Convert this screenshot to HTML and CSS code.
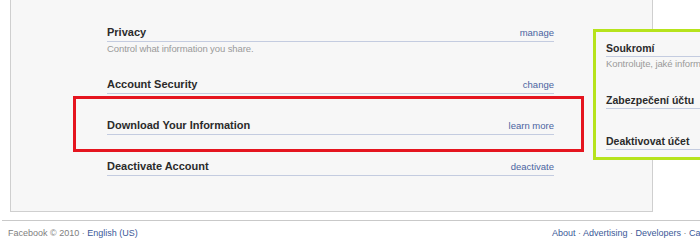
FILE: index.html
```html
<!DOCTYPE html>
<html lang="en">
<head>
    <meta charset="UTF-8">
    <title>Account Settings</title>
    <link rel="stylesheet" href="styles.css">
</head>
<body>
    <div class="page">
        <div class="panel">
            <div class="settings">
                <div class="row">
                    <div class="row-head">
                        <span class="row-title">Privacy</span>
                        <a class="row-link" href="#">manage</a>
                    </div>
                    <div class="row-desc">Control what information you share.</div>
                </div>
                <div class="row">
                    <div class="row-head">
                        <span class="row-title">Account Security</span>
                        <a class="row-link" href="#">change</a>
                    </div>
                </div>
                <div class="row">
                    <div class="row-head">
                        <span class="row-title">Download Your Information</span>
                        <a class="row-link" href="#">learn more</a>
                    </div>
                </div>
                <div class="row">
                    <div class="row-head">
                        <span class="row-title">Deactivate Account</span>
                        <a class="row-link" href="#">deactivate</a>
                    </div>
                </div>
            </div>

            <div class="highlight"></div>

            <div class="compare">
                <div class="row">
                    <div class="row-head">
                        <span class="row-title">Soukromí</span>
                        <a class="row-link" href="#">spravovat</a>
                    </div>
                    <div class="row-desc">Kontrolujte, jaké informace sdílíte.</div>
                </div>
                <div class="row">
                    <div class="row-head">
                        <span class="row-title">Zabezpečení účtu</span>
                        <a class="row-link" href="#">změnit</a>
                    </div>
                </div>
                <div class="row">
                    <div class="row-head">
                        <span class="row-title">Deaktivovat účet</span>
                        <a class="row-link" href="#">deaktivovat</a>
                    </div>
                </div>
            </div>
        </div>

        <div class="footer">
            <div class="footer-left">Facebook © 2010 · <a href="#">English (US)</a></div>
            <div class="footer-links">
                <a href="#">About</a> · <a href="#">Advertising</a> · <a href="#">Developers</a> · <a href="#">Careers</a> · <a href="#">Privacy</a> · <a href="#">Terms</a> · <a href="#">Help</a>
            </div>
        </div>
    </div>
</body>
</html>
```

FILE: styles.css
```css
html, body { margin: 0; padding: 0; background: #fff; overflow: hidden; }
body { font-family: "Liberation Sans", Arial, sans-serif; color: #333; }
a { color: #3b5998; text-decoration: none; }
.page { width: 900px; }

.panel { position: relative; margin-left: 10px; width: 641px; background: #f7f7f7; border: 1px solid #cfcfcf; border-top: none; padding: 25px 0 35px; }
.settings { margin-left: 96px; width: 447px; }
.row + .row { margin-top: 24px; }
.row-head { display: flex; justify-content: space-between; align-items: baseline; line-height: 14px; padding-bottom: 1px; border-bottom: 1px solid #c4cce0; }
.row-title { font-size: 11px; font-weight: bold; color: #2b2b2b; }
.row-link { font-size: 9.5px; color: #4b64a1; }
.row-desc { font-size: 9.5px; letter-spacing: -0.1px; line-height: 9px; margin-top: 2px; color: #9a9a9a; white-space: nowrap; }

.highlight { position: absolute; left: 62px; top: 96px; width: 505px; height: 50px; border: 3px solid #e5151f; }

.compare { position: absolute; left: 582px; top: 29px; width: 300px; background: #f7f7f7; border: 3px solid #b6e31c; padding: 9px 10px 7px; }
.compare .row + .row { margin-top: 25px; }
.compare .row-title { font-size: 10.5px; }
.compare .row-link { display: none; }

.footer { margin: 8px 0 0 2px; border-top: 1px solid #c9c9c9; padding: 6px 0 0 6px; display: flex; font-size: 9px; line-height: 12px; color: #808080; white-space: nowrap; }
.footer-left { width: 544px; flex-shrink: 0; }
```
